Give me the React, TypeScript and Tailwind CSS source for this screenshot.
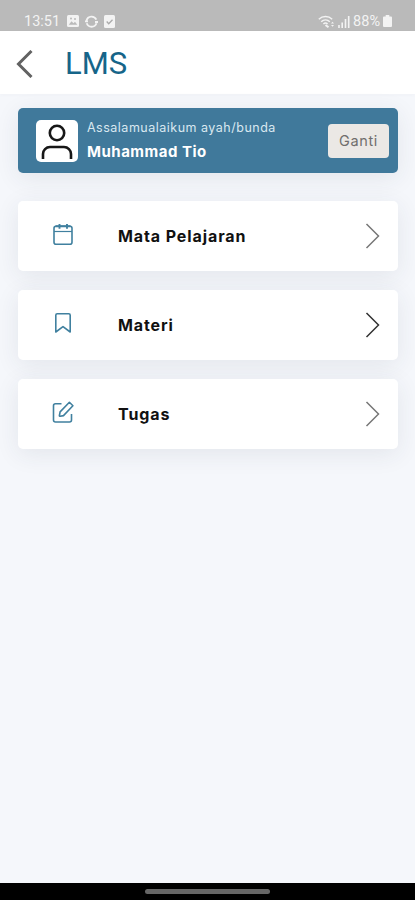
import type { ReactNode } from 'react'

type MenuItem = {
  label: string
  icon: ReactNode
  arrow: string
}

const menu: MenuItem[] = [
  {
    label: 'Mata Pelajaran',
    arrow: 'text-[#777777]',
    icon: (
      <>
        <rect x="2" y="3.2" width="18" height="18" rx="2" />
        <path d="M2 8.5h18" strokeWidth="1.2" />
        <path d="M3.500 3.300h15M7.500 1v4.700M15 1v4.700" strokeWidth="1.900" />
      </>
    ),
  },
  {
    label: 'Materi',
    arrow: 'text-[#333333]',
    icon: <path d="M3.8 20V3.2a1.4 1.4 0 0 1 1.4-1.4h11.6a1.4 1.4 0 0 1 1.4 1.4V20L11 14.6z" />,
  },
  {
    label: 'Tugas',
    arrow: 'text-[#777777]',
    icon: (
      <>
        <path d="M9.500 2.800H3.500a2 2 0 0 0-2 2V19a2 2 0 0 0 2 2h14a2 2 0 0 0 2-2v-6" />
        <path d="m17.400 1.300 3.500 3.500-9.400 9.800-3.300.700a.700.700 0 0 1-.800-.800l.700-3.600z" />
      </>
    ),
  },
]

function StatusBar() {
  return (
    <div className="flex h-[31px] shrink-0 items-center bg-[#bababa] pl-6 pr-[23px] pt-[11px] font-['Roboto',sans-serif] text-[14.5px] leading-5 text-[#f3f3f3]">
      <span className="mt-px">13:51</span>
      <svg className="ml-[7px]" width="12" height="12" viewBox="0 0 12 12">
        <rect width="12" height="12" rx="1.5" fill="currentColor" />
        <path d="M1.8 9.8 4.5 6.3l2 2 1.5-1.5 2.3 3z" fill="#bababa" />
        <circle cx="4" cy="3.5" r="1" fill="#bababa" />
        <circle cx="8" cy="4" r="1" fill="#bababa" />
      </svg>
      <svg className="ml-[6px]" width="13" height="13" viewBox="0 0 13 13" fill="none" stroke="currentColor" strokeWidth="1.8">
        <path d="M1.5 5.5a5.2 5.2 0 0 1 9.8-.8M11.5 8.3a5.2 5.2 0 0 1-9.8 0M0 6.3h3M10 7h3" />
      </svg>
      <svg className="ml-[6px]" width="11" height="13" viewBox="0 0 11 13" fill="none">
        <rect width="11" height="13" rx="1.5" fill="currentColor" />
        <path d="m2.7 6.5 2 2.2 3.8-4" stroke="#aaaaaa" strokeWidth="1.3" />
      </svg>
      <svg className="ml-auto" width="17" height="13" viewBox="0 0 17 13" fill="none" stroke="currentColor" strokeWidth="1.5">
        <path d="M.8 4.2a10 10 0 0 1 13.4 0M3.2 6.7a6.5 6.5 0 0 1 8.6 0M5.4 9a3.2 3.2 0 0 1 4.2 0" />
        <path d="m7.5 10 3 2.2" strokeWidth="2" />
        <path d="m13 8.5 1.5-1.7L16 8.5zM13 10l1.5 1.7L16 10z" fill="currentColor" stroke="none" />
      </svg>
      <svg className="ml-[3px]" width="12" height="13" viewBox="0 0 12 13" stroke="currentColor" strokeWidth="1.6">
        <path d="M1 10v3M4.2 7.5V13M7.5 4v9M10.7 1v12" />
      </svg>
      <span className="ml-[3px] mt-px">88%</span>
      <svg className="ml-[3px]" width="9" height="12" viewBox="0 0 9 12" fill="currentColor">
        <path d="M2.7 0h3.6v1.5H8a1 1 0 0 1 1 1V11a1 1 0 0 1-1 1H1a1 1 0 0 1-1-1V2.5a1 1 0 0 1 1-1h1.7z" />
      </svg>
    </div>
  )
}

function ProfileCard() {
  return (
    <div className="flex h-[65px] items-center rounded-[5px] bg-[#40799b] pl-[18px] pr-[9px] shadow-[0_5px_24px_rgba(40,50,80,0.09)]">
      <div className="flex size-[42px] items-center justify-center rounded-[5px] bg-white">
        <svg width="34" height="38" viewBox="0 0 34 38" fill="none" stroke="#171717" strokeWidth="2.6">
          <circle cx="17" cy="11" r="7.2" />
          <path d="M3 37v-5a7 7 0 0 1 7-7h14a7 7 0 0 1 7 7v5" />
        </svg>
      </div>
      <div className="mb-px ml-[9px] flex flex-col whitespace-nowrap">
        <span className="text-[12.5px] leading-6 tracking-[0.5px] text-[#d9e8f0]">Assalamualaikum ayah/bunda</span>
        <span className="text-[15px] font-bold leading-6 tracking-[0.5px] text-white">Muhammad Tio</span>
      </div>
      <button className="ml-auto h-[34px] w-[61px] rounded-[4px] bg-[#ebe8e5] text-[14.5px] tracking-[0.6px] text-[#706e6c]">
        Ganti
      </button>
    </div>
  )
}

export default function App() {
  return (
    <div className="flex h-[900px] w-full flex-col overflow-hidden bg-[#f5f7fb] font-['Inter',sans-serif]">
      <StatusBar />
      <header className="flex h-[63px] shrink-0 items-center bg-white pl-4 pt-[2px] shadow-[0_1px_4px_rgba(60,70,100,0.03)]">
        <svg width="17" height="28" viewBox="0 0 17 28" fill="none" stroke="#626262" strokeWidth="3">
          <path d="M15.5 1 2.5 14l13 13" />
        </svg>
        <h1 className="ml-8 font-['Roboto',sans-serif] text-[31px] leading-9 text-[#166589]">LMS</h1>
      </header>

      <main className="flex-1 pl-[18px] pr-[17px] pt-[14px]">
        <ProfileCard />
        <div className="mt-7 flex flex-col gap-[19px]">
          {menu.map((item) => (
            <div
              key={item.label}
              className="flex h-[70px] items-center rounded-[5px] bg-white pl-[34px] pr-[18px] shadow-[0_5px_24px_rgba(40,50,80,0.09)]"
            >
              <svg
                className="mb-[5px]"
                width="22"
                height="22"
                viewBox="0 0 22 22"
                fill="none"
                stroke="#40809f"
                strokeWidth="1.6"
                strokeLinejoin="round"
              >
                {item.icon}
              </svg>
              <span className="ml-[44px] text-[16px] font-bold tracking-[0.9px] text-[#111111]">{item.label}</span>
              <svg className={`ml-auto ${item.arrow}`} width="15" height="26" viewBox="0 0 15 26" fill="none" stroke="currentColor" strokeWidth="1.5">
                <path d="m1.5 1 12 12-12 12" />
              </svg>
            </div>
          ))}
        </div>
      </main>

      <footer className="flex h-[17px] shrink-0 items-center justify-center bg-black">
        <div className="h-[5px] w-[125px] rounded-full bg-[#666666]" />
      </footer>
    </div>
  )
}
